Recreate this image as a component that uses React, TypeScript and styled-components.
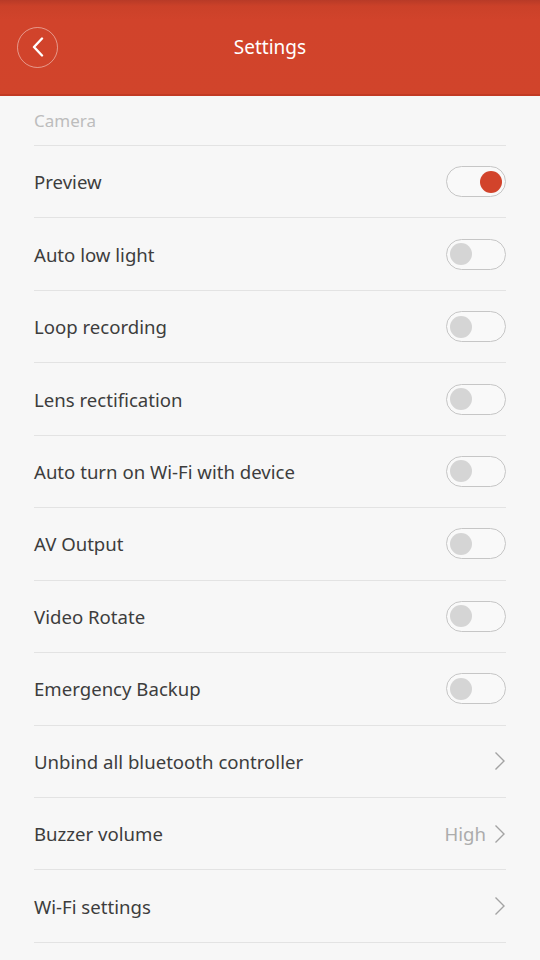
import styled, { createGlobalStyle } from "styled-components";

const GlobalStyle = createGlobalStyle`
    html, body {
        margin: 0;
        padding: 0;
        background: #f7f7f7;
    }
    * {
        box-sizing: border-box;
    }
`

const Page = styled.div`
    width: 540px;
    height: 960px;
    overflow: hidden;
    background: #f7f7f7;
    font-family: "Noto Sans", Roboto, sans-serif;
`

const Header = styled.header`
    height: 96px;
    display: flex;
    align-items: center;
    position: relative;
    background: linear-gradient(to bottom, #b83a27 0px, #cb4129 6px, #d1432b 20px, #d1442b 100%);
    border-bottom: 2px solid #c23a24;
    padding-left: 17px;
`

const BackButton = styled.button`
    width: 41px;
    height: 41px;
    border-radius: 50%;
    border: 1px solid rgba(255, 255, 255, 0.45);
    background: transparent;
    display: flex;
    align-items: center;
    justify-content: center;
    padding: 0;
    cursor: pointer;
`

const Title = styled.h1`
    position: absolute;
    left: 0;
    right: 0;
    top: 0;
    bottom: 0;
    margin: 0;
    display: flex;
    align-items: center;
    justify-content: center;
    pointer-events: none;
    color: #ffffff;
    font-size: 19px;
    font-weight: 400;
`

const List = styled.div`
    padding: 0 34px;
`

const SectionLabel = styled.div`
    height: 50px;
    display: flex;
    align-items: center;
    color: #bdbdbd;
    font-size: 17px;
    border-bottom: 1px solid #e3e3e3;
`

const Row = styled.div`
    height: 72.45px;
    display: flex;
    align-items: center;
    justify-content: space-between;
    border-bottom: 1px solid #e3e3e3;
`

const Label = styled.span`
    font-size: 18.6px;
    color: #3d3d3d;
`

const Trail = styled.div`
    display: flex;
    align-items: center;
    gap: 8px;
`

const Value = styled.span`
    font-size: 18.6px;
    color: #acacac;
`

const Switch = styled.div<{ $on: boolean }>`
    width: 60px;
    height: 31px;
    border-radius: 16px;
    border: 1px solid #c6c6c6;
    background: #f9f9f9;
    display: flex;
    align-items: center;
    justify-content: ${(p) => (p.$on ? "flex-end" : "flex-start")};
    padding: 0 3px;
`

const Knob = styled.div<{ $on: boolean }>`
    width: 22px;
    height: 22px;
    border-radius: 50%;
    background: ${(p) => (p.$on ? "#d2432b" : "#d5d5d5")};
`

const Chevron = () => (
    <svg width="12" height="20" viewBox="0 0 12 20">
        <path d="M1.5 1.5 L10 10 L1.5 18.5" fill="none" stroke="#a3a3a3" strokeWidth="1.4" />
    </svg>
)

type Item =
    | { kind: "toggle"; label: string; on: boolean }
    | { kind: "link"; label: string; value?: string }

const items: Item[] = [
    { kind: "toggle", label: "Preview", on: true },
    { kind: "toggle", label: "Auto low light", on: false },
    { kind: "toggle", label: "Loop recording", on: false },
    { kind: "toggle", label: "Lens rectification", on: false },
    { kind: "toggle", label: "Auto turn on Wi-Fi with device", on: false },
    { kind: "toggle", label: "AV Output", on: false },
    { kind: "toggle", label: "Video Rotate", on: false },
    { kind: "toggle", label: "Emergency Backup", on: false },
    { kind: "link", label: "Unbind all bluetooth controller" },
    { kind: "link", label: "Buzzer volume", value: "High" },
    { kind: "link", label: "Wi-Fi settings" },
]

export default function App() {
    return (
        <Page>
            <GlobalStyle />
            <Header>
                <BackButton aria-label="Back">
                    <svg width="14" height="20" viewBox="0 0 14 20">
                        <path d="M11 1.5 L3 10 L11 18.5" fill="none" stroke="#ffffff" strokeWidth="2.4" strokeLinecap="round" strokeLinejoin="round" />
                    </svg>
                </BackButton>
                <Title>Settings</Title>
            </Header>
            <List>
                <SectionLabel>Camera</SectionLabel>
                {items.map((item) => (
                    <Row key={item.label}>
                        <Label>{item.label}</Label>
                        {item.kind === "toggle" ? (
                            <Switch $on={item.on}>
                                <Knob $on={item.on} />
                            </Switch>
                        ) : (
                            <Trail>
                                {item.value && <Value>{item.value}</Value>}
                                <Chevron />
                            </Trail>
                        )}
                    </Row>
                ))}
            </List>
        </Page>
    )
}
